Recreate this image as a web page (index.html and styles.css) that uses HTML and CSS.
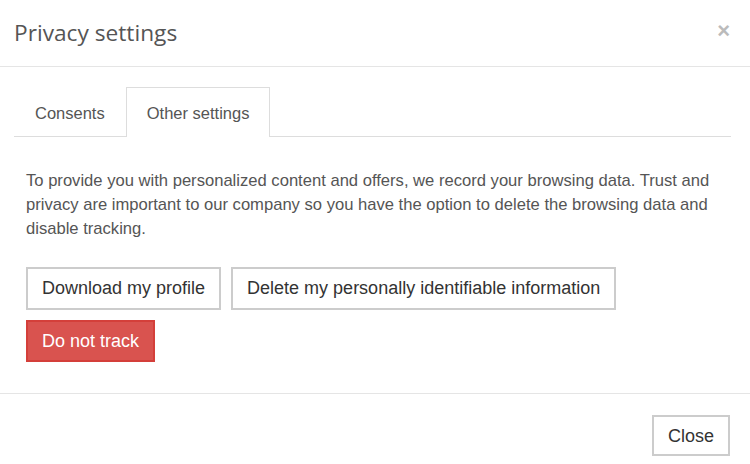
FILE: index.html
```html
<!DOCTYPE html>
<html>
<head>
<meta charset="utf-8">
<link rel="stylesheet" href="styles.css">
</head>
<body>
<div class="modal">
  <div class="modal-header">
    <h4 class="modal-title">Privacy settings</h4>
    <button class="close" aria-label="Close">&times;</button>
  </div>
  <div class="modal-body">
    <ul class="tabs">
      <li class="tab">Consents</li>
      <li class="tab active">Other settings</li>
    </ul>
    <div class="tab-content">
      <p class="intro">To provide you with personalized content and offers, we record your browsing data. Trust and privacy are important to our company so you have the option to delete the browsing data and disable tracking.</p>
      <div class="actions">
        <button class="btn">Download my profile</button>
        <button class="btn">Delete my personally identifiable information</button>
      </div>
      <div class="actions">
        <button class="btn btn-danger">Do not track</button>
      </div>
    </div>
  </div>
  <div class="modal-footer">
    <button class="btn">Close</button>
  </div>
</div>
</body>
</html>
```
FILE: styles.css
```css
html, body {
  margin: 0;
  padding: 0;
  background: #fff;
}
.modal {
  width: 750px;
  height: 464px;
  display: flex;
  flex-direction: column;
  font-family: "Liberation Sans", Arial, sans-serif;
  color: #555;
}
.modal-header {
  height: 66px;
  border-bottom: 1px solid #e5e5e5;
  display: flex;
  align-items: center;
  justify-content: space-between;
  padding: 0 19px 0 14px;
  box-sizing: content-box;
}
.modal-title {
  margin: 0;
  font-family: "Open Sans", sans-serif;
  font-weight: 400;
  font-size: 22.7px;
  color: #555;
  line-height: 1;
  padding-top: 1px;
}
.close {
  border: 0;
  background: none;
  padding: 0;
  font-family: "Liberation Sans", Arial, sans-serif;
  font-size: 22px;
  font-weight: 700;
  color: #bbb;
  line-height: 1;
  margin-top: -4px;
  margin-right: 1px;
}
.modal-body {
  padding: 20px 19px 0 14px;
  height: 306px;
}
.tabs {
  list-style: none;
  margin: 0;
  padding: 0;
  display: flex;
  border-bottom: 1px solid #ddd;
}
.tab {
  padding: 0 20px;
  height: 48px;
  line-height: 50px;
  font-size: 16.5px;
  color: #555;
  border: 1px solid transparent;
  border-bottom: 0;
  margin-bottom: -1px;
}
.tab.active {
  border-color: #ddd;
  background: #fff;
  height: 49px;
}
.tab-content {
  padding: 32px 12px 0 12px;
}
.intro {
  margin: 0 0 26px;
  font-size: 16.6px;
  line-height: 24px;
  color: #555;
}
.actions {
  display: flex;
  gap: 10px;
  margin-bottom: 10px;
}
.btn {
  font-family: "Liberation Sans", Arial, sans-serif;
  font-size: 18px;
  color: #333;
  background: #fff;
  border: 2px solid #ccc;
  padding: 0 14px;
  height: 43px;
  line-height: 39px;
  cursor: pointer;
}
.btn-danger {
  background: #d9534f;
  border-color: #d43f3a;
  color: #fff;
  height: 42px;
  line-height: 38px;
}
.modal-footer {
  border-top: 1px solid #e5e5e5;
  padding: 21px 20px 0 0;
  display: flex;
  justify-content: flex-end;
  flex: 1;
  align-items: flex-start;
}
.modal-footer .btn {
  height: 41px;
  padding: 0 14px;
}
```
